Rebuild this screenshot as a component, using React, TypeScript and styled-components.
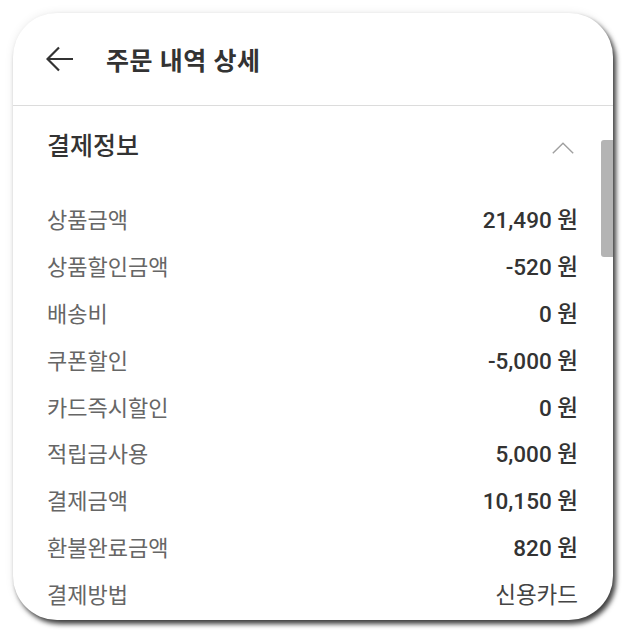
import styled, { createGlobalStyle } from "styled-components";

const GlobalStyle = createGlobalStyle`
  body {
    margin: 0;
    background: #ffffff;
    font-family: Roboto, "Noto Sans CJK KR", sans-serif;
  }
`;

const Page = styled.div`
  width: 636px;
  height: 644px;
  padding: 13px 0 0 13px;
  box-sizing: border-box;
`;

const Card = styled.div`
  position: relative;
  width: 600px;
  height: 607px;
  background: #ffffff;
  border-radius: 44px;
  overflow: hidden;
  box-shadow: 3px 4px 5px rgba(0, 0, 0, 0.75), 0 0 10px rgba(0, 0, 0, 0.08);
`;

const Header = styled.header`
  height: 92px;
  display: flex;
  align-items: center;
  gap: 32px;
  padding-left: 33px;
  border-bottom: 1px solid #dcdcdc;
`;

const BackButton = styled.button`
  border: 0;
  background: none;
  padding: 0;
  display: flex;
  color: #333333;
`;

const Title = styled.h1`
  margin: 0;
  font-size: 25px;
  font-weight: 700;
  color: #333333;
  letter-spacing: 0.5px;
`;

const Content = styled.div`
  padding: 0 35px 0 34px;
`;

const SectionHead = styled.div`
  height: 76px;
  padding-bottom: 8px;
  display: flex;
  align-items: center;
  justify-content: space-between;
`;

const SectionTitle = styled.h2`
  margin: 0;
  font-size: 25px;
  font-weight: 500;
  color: #333333;
`;

const Toggle = styled.span`
  display: flex;
  margin: 7px 4px 0 0;
  color: #a0a0a0;
`;

const List = styled.dl`
  margin: 0;
  padding-top: 5px;
`;

const Row = styled.div`
  height: 46.8px;
  display: flex;
  align-items: center;
  justify-content: space-between;
`;

const Label = styled.dt`
  font-size: 22px;
  color: #666666;
`;

const Value = styled.dd<{ $plain?: boolean }>`
  margin: 0;
  font-size: 22.5px;
  font-weight: ${(p) => (p.$plain ? 400 : 500)};
  color: ${(p) => (p.$plain ? "#444444" : "#333333")};
`;

const Scrollbar = styled.div`
  position: absolute;
  top: 127px;
  right: 0;
  width: 12px;
  height: 117px;
  background: #b4b4b4;
  border-radius: 3px 0 0 3px;
`;

const rows: { label: string; value: string; plain?: boolean }[] = [
  { label: "상품금액", value: "21,490 원" },
  { label: "상품할인금액", value: "-520 원" },
  { label: "배송비", value: "0 원" },
  { label: "쿠폰할인", value: "-5,000 원" },
  { label: "카드즉시할인", value: "0 원" },
  { label: "적립금사용", value: "5,000 원" },
  { label: "결제금액", value: "10,150 원" },
  { label: "환불완료금액", value: "820 원" },
  { label: "결제방법", value: "신용카드", plain: true },
];

export default function App() {
  return (
    <Page>
      <GlobalStyle />
      <Card>
        <Header>
          <BackButton>
            <svg width="28" height="26" viewBox="0 0 28 26" fill="none">
              <path
                d="M27 13H2M13 1.5L1.5 13L13 24.5"
                stroke="currentColor"
                strokeWidth="2.2"
              />
            </svg>
          </BackButton>
          <Title>주문 내역 상세</Title>
        </Header>
        <Content>
          <SectionHead>
            <SectionTitle>결제정보</SectionTitle>
            <Toggle>
              <svg width="22" height="12" viewBox="0 0 22 12" fill="none">
                <path d="M0.8 11.3L11 1.2L21.2 11.3" stroke="currentColor" strokeWidth="1.4" />
              </svg>
            </Toggle>
          </SectionHead>
          <List>
            {rows.map((r) => (
              <Row key={r.label}>
                <Label>{r.label}</Label>
                <Value $plain={r.plain}>{r.value}</Value>
              </Row>
            ))}
          </List>
        </Content>
        <Scrollbar />
      </Card>
    </Page>
  );
}
